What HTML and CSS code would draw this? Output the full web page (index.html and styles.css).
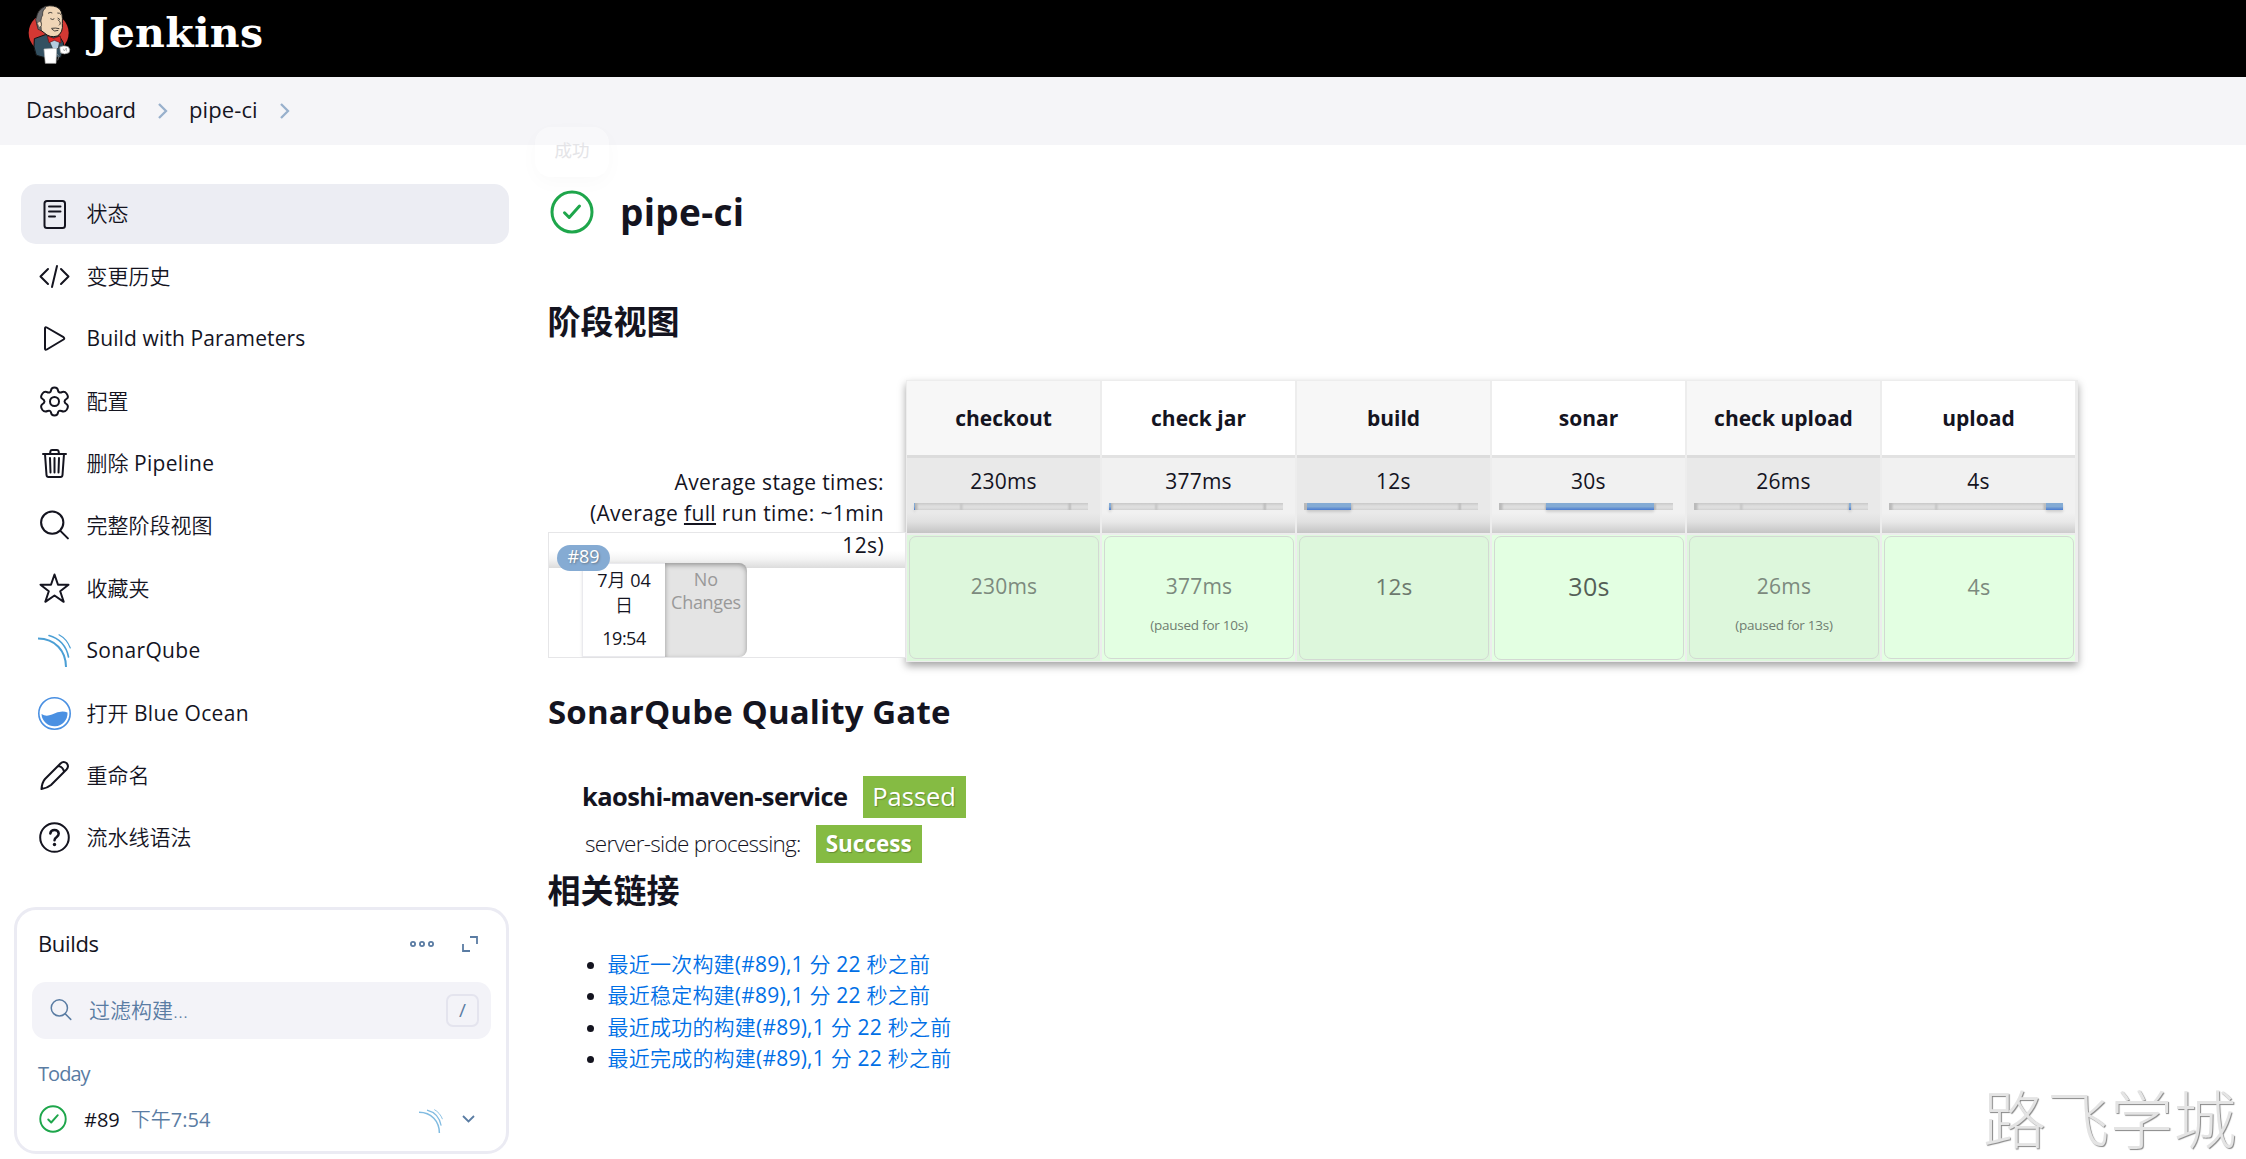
FILE: index.html
```html
<!DOCTYPE html>
<html lang="zh-CN">
<head>
<meta charset="utf-8">
<title>pipe-ci [Jenkins]</title>
<link rel="stylesheet" href="styles.css">
</head>
<body>
<svg class="defs" width="0" height="0">
  <symbol id="sonar" viewBox="0 0 33 33"><g fill="none" stroke="#4b9fd5"><path stroke-width="2" d="M0 4.500C17 4.500 28 17 28 33"/><path stroke-width="1.600" d="M11 1.500C21 4 28.500 12 30.500 23"/><path stroke-width="1.200" d="M21 .800C26 3.500 30 8 32.300 14"/></g></symbol>
  <symbol id="search" viewBox="0 0 32 32"><g fill="none" stroke="currentColor" stroke-width="2" stroke-linecap="round"><circle cx="13.800" cy="13.200" r="10.800"/><path d="M21.700 21.200L29 28.500"/></g></symbol>
  <symbol id="success" viewBox="0 0 44 44"><g fill="none" stroke="#1ea64b" stroke-width="3" stroke-linecap="round" stroke-linejoin="round"><circle cx="22" cy="22" r="20"/><path d="M14.500 22.800L19.200 27.500 29.500 16"/></g></symbol>
</svg>
<header class="header">
  <svg class="logo" viewBox="0 0 180 210">
    <ellipse cx="86" cy="99" rx="60" ry="59" fill="#d33833"/>
    <path d="M43 116L76 104 118 108 130 128 131 146 122 172 75 173 49 166Q38 140 43 116Z" fill="#335061" stroke="#111" stroke-width="3"/>
    <path d="M50 62Q48 30 76 19 103 13 119 27 129 39 127 70 130 98 112 108 90 115 72 98L59 88Q50 78 50 62Z" fill="#f0d6b7" stroke="#181818" stroke-width="3"/>
    <path d="M74 20Q52 32 50 51 44 57 50 70L54 88 64 92Q60 53 68 46 66 31 78 23Z" fill="#6d6d70" stroke="#222" stroke-width="2"/>
    <path d="M52 68Q59 60 64 68 67 78 59 82" fill="#f0d6b7" stroke="#222" stroke-width="2"/>
    <path d="M84 40Q91 35 97 39M112 39Q120 38 123 44M91 56Q99 61 103 56M113 54L120 59M114 59Q126 70 117 76M94 85Q108 83 118 86M95 87Q103 97 115 91" fill="none" stroke="#222" stroke-width="2.500"/>
    <path d="M86 119L99 149 115 145 120 119Z" fill="#b4cde0" stroke="#222" stroke-width="2"/>
    <path d="M82 108L101 115 121 108 123 129 103 121 87 128Z" fill="#e02b2b" stroke="#611" stroke-width="2"/>
    <path d="M72 147L110 145 108 190 76 190Z" fill="#fff" stroke="#bbb" stroke-width="2"/>
    <path d="M119 141Q131 134 145 140 153 149 147 158 133 166 121 158Z" fill="#fff" stroke="#777" stroke-width="2"/>
    <path d="M130 146L133 153 139 144 140 154M111 162L117 169 113 181" fill="none" stroke="#999" stroke-width="2"/>
  </svg>
  <span class="brand">Jenkins</span>
</header>
<nav class="crumbs">
  <span class="crumb-dash">Dashboard</span>
  <svg class="chev" viewBox="0 0 11 18"><path d="M2 2L9 9 2 16"/></svg>
  <span class="crumb-pipe">pipe-ci</span>
  <svg class="chev" viewBox="0 0 11 18"><path d="M2 2L9 9 2 16"/></svg>
</nav>
<div class="page">
  <aside class="side">
    <div class="tasks">
      <a class="task active"><svg viewBox="0 0 33 33"><rect x="6.500" y="3" width="20.500" height="27" rx="2.500"/><path d="M11 8.500H22.500M11 13.500H22.500M11 18.500H17"/></svg><span>状态</span></a>
      <a class="task"><svg viewBox="0 0 33 33"><path d="M10 9L2.500 16.500 10 24M23 9L30.500 16.500 23 24M19 6L14 27"/></svg><span>变更历史</span></a>
      <a class="task"><svg viewBox="0 0 33 33"><path d="M7 6.500Q7 4.500 8.800 5.500L25.500 15.200Q27 16.500 25.500 17.500L8.800 27.500Q7 28.500 7 26.500Z"/></svg><span><i class="t-build">Build with Parameters</i></span></a>
      <a class="task"><svg viewBox="0 0 33 33"><path d="M13 5.500Q13.300 2.500 16.500 2.500T20 5.500Q20.500 8 23 7.500 26.500 5.800 28.500 8.500 31 12 29 13.500 26.500 15 26.500 16.500T29 19.500Q31 21.500 28.500 25 26.500 27.500 23.500 26 20.500 25 20 27.500 19.700 30.500 16.500 30.500T13 27.500Q12.500 25 9.500 26 6.500 27.500 4.500 25 2 21.500 4 19.500 6.500 18 6.500 16.500T4 13.500Q2 12 4.500 8.500 6.500 5.800 10 7.500 12.500 8 13 5.500Z"/><circle cx="16.500" cy="16.500" r="4.500"/></svg><span>配置</span></a>
      <a class="task"><svg viewBox="0 0 33 33"><path d="M5 7H28M12 7L12.500 4Q12.700 3 14 3H19Q20.300 3 20.500 4L21 7M7 7L8.500 28Q8.700 30 10.500 30H22.500Q24.300 30 24.500 28L26 7M12 11L12.500 25.500M16.500 11V25.500M21 11L20.500 25.500"/></svg><span>删除 <i class="t-pipeline">Pipeline</i></span></a>
      <a class="task"><svg viewBox="0 0 32 32"><use href="#search"/></svg><span>完整阶段视图</span></a>
      <a class="task"><svg viewBox="0 0 33 33"><path d="M16.500 2.500L20 12.700H30.500L22.200 19.200 25.700 29.800 16.500 23.500 7.300 29.800 10.800 19.200 2.500 12.700H13Z"/></svg><span>收藏夹</span></a>
      <a class="task"><svg><use href="#sonar"/></svg><span><i class="t-sonar">SonarQube</i></span></a>
      <a class="task"><svg viewBox="0 0 33 33"><circle cx="16.500" cy="16.500" r="15.700" stroke="#4a90e2" stroke-width="1.600"/><path d="M3.500 17Q8 20 14 17.500 23 13 29.500 15.500A13 13 0 0 1 3.500 17Z" fill="#4a90e2" stroke="none"/></svg><span>打开 <i class="t-ocean">Blue Ocean</i></span></a>
      <a class="task"><svg viewBox="0 0 33 33"><path d="M3.500 30Q4 23.500 7 20L22.500 4.500Q25.500 1.700 28.800 4.300 31.300 7.500 28.500 10.500L13 26Q9.500 29 3.500 30ZM20.500 7Q25 8 26 12.500"/></svg><span>重命名</span></a>
      <a class="task"><svg viewBox="0 0 33 33"><circle cx="16.500" cy="16.500" r="14.300"/><path stroke-width="2.500" d="M12.300 12.500Q12.800 9 16.500 9T20.700 12.500Q20.700 14.500 18.700 16 16.500 17.500 16.500 19.300"/><circle cx="16.500" cy="23.500" r="1.700" fill="#14141f" stroke="none"/></svg><span>流水线语法</span></a>
    </div>
    <section class="builds">
      <div class="builds-head"><span class="b-title">Builds</span>
        <svg class="dots" viewBox="0 0 24 8"><circle cx="3" cy="4" r="2.100"/><circle cx="12" cy="4" r="2.100"/><circle cx="21" cy="4" r="2.100"/></svg>
        <svg class="expand" viewBox="0 0 18 18"><path d="M9 2H16V9M2 9V16H9"/></svg>
      </div>
      <div class="filter"><svg class="mag"><use href="#search"/></svg><span>过滤构建...</span><kbd>/</kbd></div>
      <div class="day"><span class="b-today">Today</span></div>
      <div class="build"><svg class="ok"><use href="#success"/></svg><span class="b-num">#89</span><span class="b-time">下午<i class="b-clock">7:54</i></span><svg class="mini-sonar"><use href="#sonar"/></svg><svg class="down" viewBox="0 0 15 10"><path d="M2 2L7.500 7.500 13 2"/></svg></div>
    </section>
  </aside>
  <main class="main">
    <div class="tip">成功</div>
    <div class="title"><svg><use href="#success"/></svg><h1>pipe-ci</h1></div>
    <h2 class="h-stage">阶段视图</h2>
    <div class="stages">
      <div class="legend">
        <div class="avg">Average stage times:<br>(Average <u>full</u> run time: ~1min<br>12s)</div>
        <div class="run">
          <span class="badge">#89</span>
          <div class="when"><span><i>7</i>月 <i>04</i></span><span>日</span><span class="clock">19:54</span></div>
          <div class="changes"><span>No</span><span class="c-ch">Changes</span></div>
        </div>
      </div>
      <div class="cols">
        <div class="col"><div class="name">checkout</div><div class="mean"><span>230ms</span><div class="bar"><b style="left:0;width:1px"></b></div></div><div class="cell"><div class="box"><span>230ms</span></div></div></div>
        <div class="col"><div class="name">check jar</div><div class="mean"><span>377ms</span><div class="bar"><b style="left:0;width:2px"></b></div></div><div class="cell"><div class="box"><span>377ms</span><small>(paused for 10s)</small></div></div></div>
        <div class="col"><div class="name">build</div><div class="mean"><span>12s</span><div class="bar"><b style="left:3px;width:44px"></b></div></div><div class="cell"><div class="box tall m"><span>12s</span></div></div></div>
        <div class="col"><div class="name">sonar</div><div class="mean"><span>30s</span><div class="bar"><b style="left:47px;width:108px"></b></div></div><div class="cell"><div class="box tall l"><span>30s</span></div></div></div>
        <div class="col"><div class="name">check upload</div><div class="mean"><span>26ms</span><div class="bar"><b style="left:155px;width:2px"></b></div></div><div class="cell"><div class="box"><span>26ms</span><small>(paused for 13s)</small></div></div></div>
        <div class="col"><div class="name">upload</div><div class="mean"><span>4s</span><div class="bar"><b style="left:157px;width:17px"></b></div></div><div class="cell"><div class="box s"><span>4s</span></div></div></div>
      </div>
    </div>
    <h2 class="h-sonar">SonarQube Quality Gate</h2>
    <div class="gate"><strong class="g-name">kaoshi-maven-service</strong><span class="pill">Passed</span></div>
    <div class="proc"><span class="g-proc">server-side processing:</span><span class="pill small">Success</span></div>
    <h2 class="h-links">相关链接</h2>
    <ul class="links">
      <li><a>最近一次构建<i>(#89),1</i> 分 <i>22</i> 秒之前</a></li>
      <li><a>最近稳定构建<i>(#89),1</i> 分 <i>22</i> 秒之前</a></li>
      <li><a>最近成功的构建<i>(#89),1</i> 分 <i>22</i> 秒之前</a></li>
      <li><a>最近完成的构建<i>(#89),1</i> 分 <i>22</i> 秒之前</a></li>
    </ul>
  </main>
</div>
<div class="watermark">路飞学城</div>
</body>
</html>
```
FILE: styles.css
```css
* { box-sizing: border-box; }
body { margin: 0; width: 2246px; height: 1159px; overflow: hidden; position: relative; background: #fff; color: #14141f; font: 21px/31px "Open Sans", "Noto Sans CJK SC", sans-serif; }
i { font-style: normal; font-weight: 400; }
svg { flex: none; display: block; }
.defs { position: absolute; }
.header { height: 77px; background: #000; display: flex; align-items: flex-start; padding-left: 20px; }
.logo { width: 60px; height: 70px; }
.brand { margin-left: 9px; font: bold 41px/67px "DejaVu Serif", serif; letter-spacing: .3px; color: #fff; }
.crumbs { height: 68px; background: #f5f5f8; display: flex; align-items: center; padding: 0 0 3px 26px; font-size: 22px; }
.crumb-dash { letter-spacing: -.45px; }
.crumb-pipe { letter-spacing: .1px; margin-left: -1px; }
.chev { width: 11px; height: 18px; margin: 2px 22px 0 21.500px; fill: none; stroke: #98b0cc; stroke-width: 2.300; }
.page { display: flex; }
.side { width: 509px; padding-top: 39px; flex: none; }
.tasks { display: flex; flex-direction: column; gap: 2.400px; padding-left: 21px; }
.task { height: 60px; border-radius: 15px; display: flex; align-items: center; padding-left: 17px; gap: 15.500px; font-weight: 350; }
.task.active { background: #ecedf3; }
.task svg { width: 33px; height: 33px; fill: none; stroke: #14141f; stroke-width: 2; stroke-linecap: round; stroke-linejoin: round; color: #14141f; }
.task.active span { padding-bottom: 2px; }
.t-build { letter-spacing: .12px; }
.t-pipeline, .t-sonar, .t-ocean { letter-spacing: .32px; }
.builds { margin: 39px 0 0 14px; height: 247px; border: 3px solid #ebebf3; border-radius: 22px; padding: 0 15px; color: #5a7ca3; }
.builds-head { height: 72px; display: flex; align-items: center; padding: 0 12px 4px 6px; }
.b-title { color: #14141f; font-size: 22px; letter-spacing: -.35px; margin-right: auto; padding-bottom: 1px; }
.builds-head svg, .down { fill: none; stroke: #5a7ca3; stroke-width: 1.800; }
.dots { width: 24px; height: 8px; margin-right: 27px; }
.expand { width: 18px; height: 18px; }
.filter { height: 57px; border-radius: 14px; background: #f3f3f8; display: flex; align-items: center; padding: 0 12px 0 17px; font-weight: 350; }
.mag { width: 24px; height: 24px; margin-right: 16px; }
.filter span { margin-right: auto; }
kbd { width: 33px; height: 33px; border: 2px solid #e4e4ee; border-radius: 7px; text-align: center; font: 19px/28px "Open Sans", sans-serif; }
.day { font-size: 20px; padding: 19px 0 0 6px; }
.b-today { letter-spacing: -.95px; }
.build { display: flex; align-items: center; height: 57px; padding: 4px 15px 0 7px; font-size: 20px; }
.ok { width: 28px; height: 28px; margin-right: 17px; }
.b-num { color: #14141f; margin-right: 11px; }
.b-time { font-weight: 350; }
.mini-sonar { width: 24px; height: 24px; margin: 4px 18px 0 auto; opacity: .7; }
.down { width: 15px; height: 10px; }
.main { flex: 1; padding-left: 38px; position: relative; }
.tip { position: absolute; left: 26px; top: -18px; width: 74px; height: 50px; border-radius: 16px; background: rgba(255,255,255,.35); box-shadow: 0 6px 20px rgba(0,0,0,.025); font-size: 17.500px; line-height: 47px; text-align: center; color: #e4e4e7; }
.title { display: flex; align-items: center; height: 134px; padding-left: 3px; }
.title svg { width: 44px; height: 44px; margin-right: 26px; }
h1 { margin: 0; font: bold 37px/50px "Open Sans", sans-serif; letter-spacing: .3px; }
h2 { margin: 0; font-size: 33px; line-height: 50px; font-weight: 700; padding-left: .5px; }
.h-stage { margin-top: 18px; }
.stages { display: flex; margin-top: 33px; }
.legend { width: 359px; }
.avg { height: 152px; padding: 87px 22px 0 0; text-align: right; position: relative; z-index: 1; line-height: 31.300px; letter-spacing: .38px; white-space: nowrap; }
.run { position: relative; height: 126px; margin-left: 1px; border: 1px solid #e6e6e8; background: linear-gradient(#fff 18px, #f4f4f4 26px, #dcdcdc 35px, #fff 35px) 0 0 / 100% 100%; padding: 30px 0 0 33px; display: flex; }
.badge { position: absolute; left: 8px; top: 12px; width: 53px; height: 26px; border-radius: 13px; background: #85abd3; color: #fff; font-size: 18px; line-height: 23px; text-align: center; text-shadow: 1px 1px 2px #678; z-index: 2; }
.when { width: 83px; background: #fff; border: solid #eaeaee; border-width: 1px 0 1px 1px; display: flex; flex-direction: column; text-align: center; font-size: 18px; line-height: 25px; padding-top: 4px; box-shadow: -1px 0 2px rgba(0,0,0,.06); font-weight: 350; }
.when .clock { margin-top: 8px; font-weight: 400; letter-spacing: -.5px; }
.changes { width: 82px; background: #e4e4e4; border-radius: 0 8px 8px 0; box-shadow: inset 0 2px 5px rgba(0,0,0,.35); color: #999; text-align: center; font-size: 18px; line-height: 23px; padding-top: 5px; display: flex; flex-direction: column; align-items: center; }
.c-ch { letter-spacing: -.3px; }
.cols { display: flex; padding: 1px; background: #ededed; box-shadow: 0 4px 8px rgba(0,0,0,.36); width: 1172px; height: 282px; }
.col { width: 195px; padding-right: 2px; text-align: center; }
.name { height: 74px; background: #fff; font-weight: 700; line-height: 75px; }
.mean { height: 78px; border-top: 3px solid #e2e2e2; background: linear-gradient(#f1f1f1 55px, #e8e8e8 64px, #ccc); padding-top: 8px; }
.mean span { display: block; height: 37px; line-height: 31px; letter-spacing: .25px; }
.bar { position: relative; width: 174px; height: 7px; margin-left: 7px; background: linear-gradient(90deg, #bbb 0 2px, transparent 5px 45px, #c6c6c6 47px, transparent 50px 153px, #bdbdbd 156px, transparent 158px), linear-gradient(#c8c8c8, #dedede 3px 5px, #d0d0d0); }
.bar b { position: absolute; top: 0; height: 7px; background: linear-gradient(#84abd4 50%, #4a7bd0); box-shadow: 0 2px 3px rgba(0,0,0,.15); }
.cell { height: 126px; margin-top: 2px; background: #e3ffe2; padding: 1px 0 0 2px; }
.box { width: 190px; height: 123px; border: 1.500px solid #d3d9d3; border-radius: 7px; color: #7c8a7e; padding-top: 34px; }
.box span { display: block; line-height: 31px; letter-spacing: .25px; }
.box small { display: block; font-size: 13.500px; line-height: 20px; margin-top: 13px; color: #6f7d71; letter-spacing: -.25px; }
.box.tall { height: 124px; }
.box.s { font-size: 21.500px; }
.box.m { font-size: 22.500px; color: #6d796e; }
.box.l { font-size: 25px; color: #555f57; }
.col:nth-child(odd) .name { background: #f7f7f7; }
.col:nth-child(odd) .mean { border-color: #dcdcdc; background: linear-gradient(#e9e9e9 55px, #e0e0e0 64px, #c4c4c4); }
.col:nth-child(odd) .cell { background: #ddf7dc; }
.h-sonar { margin-top: 25px; letter-spacing: .14px; padding-left: 1px; }
.gate { height: 42px; margin: 39px 0 0 35px; display: flex; align-items: center; font-size: 25.500px; }
.g-name { letter-spacing: -.58px; padding-bottom: 1px; margin-right: 1px; }
.pill { background: #85bb43; color: #fff; width: 103px; height: 42px; text-align: center; line-height: 41px; margin-left: 14px; text-shadow: 1px 1px 1px rgba(0,0,0,.25); font-weight: 500; }
.proc { height: 38px; margin: 7px 0 0 38px; display: flex; align-items: center; font-size: 22.500px; font-weight: 300; }
.g-proc { letter-spacing: -.72px; padding-bottom: 2px; margin-right: 1px; }
.small { width: 106px; height: 38px; line-height: 37px; font-weight: 700; margin-left: 14px; }
.h-links { margin-top: 3px; }
.links { margin: 33px 0 0; padding-left: 60.500px; line-height: 31.300px; font-weight: 350; }
.links a { color: #006fe6; letter-spacing: .22px; }
.watermark { position: absolute; left: 1983px; top: 1074px; font-size: 63px; line-height: 90px; letter-spacing: .5px; font-weight: 300; color: #e4e4e4; text-shadow: 1px 1px 1px #888; }
```
